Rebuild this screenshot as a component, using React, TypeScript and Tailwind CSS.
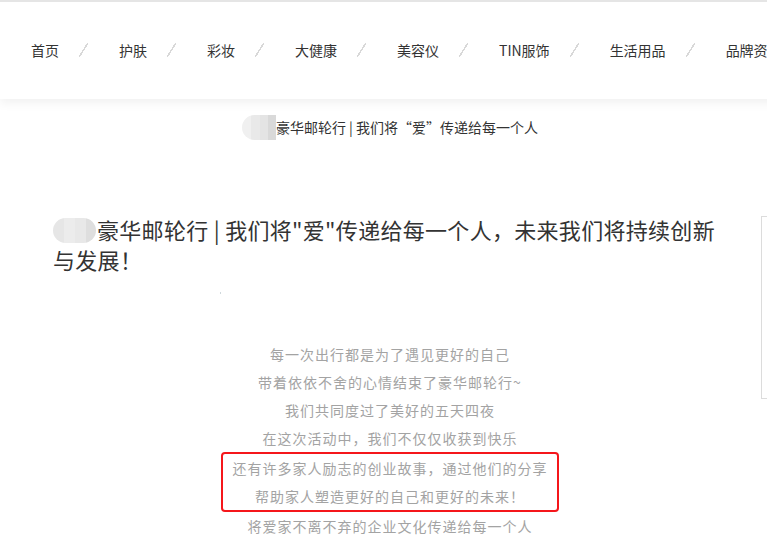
import React from 'react';

const NAV_ITEMS = ['首页', '护肤', '彩妆', '大健康', '美容仪', 'TIN服饰', '生活用品', '品牌资讯'];

const PARAGRAPHS_TOP = [
  '每一次出行都是为了遇见更好的自己',
  '带着依依不舍的心情结束了豪华邮轮行~',
  '我们共同度过了美好的五天四夜',
  '在这次活动中，我们不仅仅收获到快乐',
];

const PARAGRAPHS_BOXED = ['还有许多家人励志的创业故事，通过他们的分享', '帮助家人塑造更好的自己和更好的未来！'];

// blurred (mosaic) logo placeholder
function BlurMark({ size }: { size: 'sm' | 'lg' }) {
  if (size === 'sm') {
    return (
      <span className="inline-flex h-[25px] w-[34px] overflow-hidden rounded-l-full rounded-r-[4px] align-middle">
        <span className="w-[9px] bg-[#f0f0f0]" />
        <span className="w-[9px] bg-[#e9e9e9]" />
        <span className="w-[8px] bg-[#e4e4e4]" />
        <span className="w-[8px] bg-[#d9d9d9]" />
      </span>
    );
  }
  return (
    <span className="mr-[1px] inline-flex h-[25px] w-[43px] overflow-hidden rounded-full align-[-4px]">
      <span className="w-[11px] bg-[#e6e6e6]" />
      <span className="w-[11px] bg-[#ececec]" />
      <span className="w-[11px] bg-[#e8e8e8]" />
      <span className="w-[10px] bg-[#dedede]" />
    </span>
  );
}

export default function App() {
  return (
    <div
      className="h-[559px] w-[767px] overflow-hidden bg-white text-[#333]"
      style={{ fontFamily: '"Noto Sans CJK SC", "Microsoft YaHei", sans-serif' }}
    >
      {/* top navigation */}
      <header className="relative z-10 h-[99px] w-[1000px] border-t-2 border-[#e5e5e5] bg-white shadow-[0_4px_10px_rgba(0,0,0,0.06)]">
        <nav className="flex h-full items-center pb-[2px] pl-[31px] text-[14px] leading-none">
          {NAV_ITEMS.map((item, i) => (
            <div key={item} className="flex items-center">
              <span>{item}</span>
              {i < NAV_ITEMS.length - 1 && (
                <span className="ml-[20px] mr-[31px] h-[14px] w-[9px] bg-[linear-gradient(to_bottom_right,transparent_45%,#d8d8d8_45%,#d8d8d8_55%,transparent_55%)]" />
              )}
            </div>
          ))}
        </nav>
      </header>

      <div className="flex w-[1100px] pl-[53px]">
        {/* article column */}
        <main className="w-[674px]">
          <div className="flex h-[56px] items-center justify-center text-[14px]">
            <BlurMark size="sm" />
            <span>豪华邮轮行 | 我们将“爱”传递给每一个人</span>
          </div>

          <h1 className="mt-[59px] text-[22px] leading-[30px] tracking-[0.3px]">
            <BlurMark size="lg" />
            豪华邮轮行 | 我们将"爱"传递给每一个人，未来我们将持续创新与发展！
          </h1>

          <div className="mt-[18px] ml-[167px] h-[2px] w-[1px] bg-[#cfd8dc]" />

          <div className="mt-[46px] text-center text-[14px] leading-[28px] tracking-[1px] text-[#a3a3a3]">
            {PARAGRAPHS_TOP.map((line) => (
              <p key={line}>{line}</p>
            ))}
            <div className="mx-auto w-[338px] rounded-[4px] border-2 border-[#f5161b]">
              {PARAGRAPHS_BOXED.map((line) => (
                <p key={line}>{line}</p>
              ))}
            </div>
            <p>将爱家不离不弃的企业文化传递给每一个人</p>
          </div>
        </main>

        {/* side panel */}
        <aside className="ml-[34px] mt-[117px] h-[183px] w-[260px] border border-[#dcdcdc]" />
      </div>
    </div>
  );
}
